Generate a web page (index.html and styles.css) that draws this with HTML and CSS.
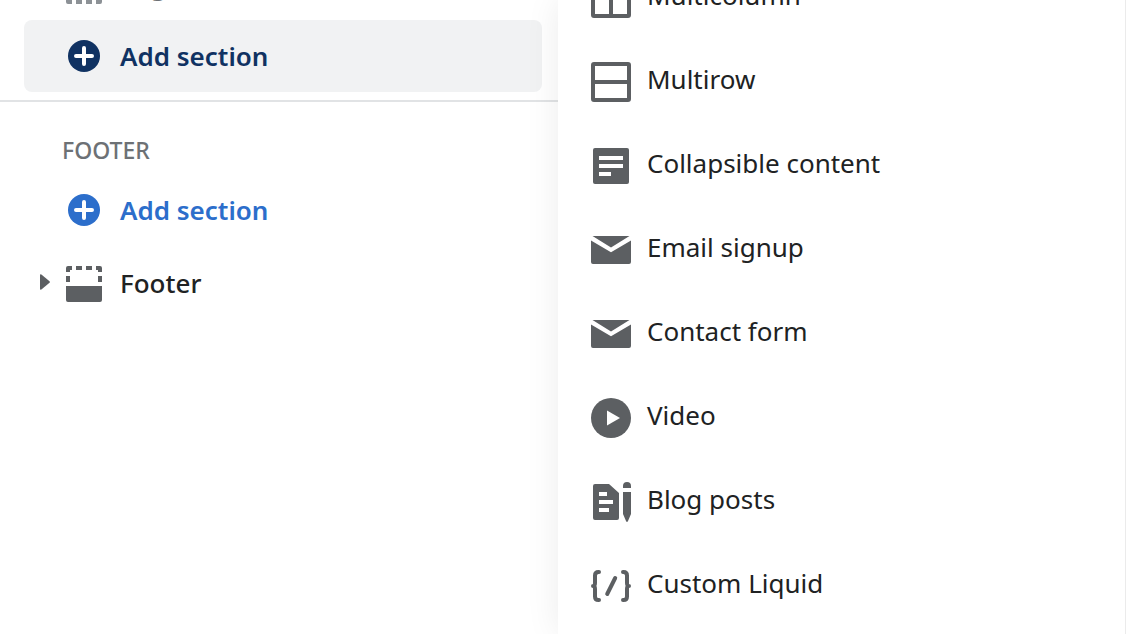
FILE: index.html
```
<!DOCTYPE html>
<html lang="en">
<head>
  <meta charset="UTF-8" />
  <meta name="viewport" content="width=device-width, initial-scale=1.0"/>
  <title>Theme editor</title>
  <link rel="stylesheet" href="styles.css">
</head>
<body>
  <aside class="sidebar">
    <section class="group template">
      <div class="row muted">
        <span class="caret"></span>
        <svg class="icon" viewBox="0 0 40 40"><path d="M4 2h32a2 2 0 0 1 2 2v14H2V4a2 2 0 0 1 2-2zM2 22h4v6H2zM34 22h4v6h-4zM2 32h4v2h2v4H4a2 2 0 0 1-2-2zM12 34h6v4h-6zM22 34h6v4h-6zM34 32h4v4a2 2 0 0 1-2 2h-4v-4h2z"/></svg>
        <span class="label">Page</span>
      </div>
      <button class="add active" type="button">
        <svg class="icon" viewBox="0 0 40 40"><circle cx="20" cy="20" r="16"/><path class="line" d="M20 12v16M12 20h16"/></svg>
        Add section
      </button>
    </section>

    <section class="group footer">
      <h2>FOOTER</h2>
      <button class="add" type="button">
        <svg class="icon" viewBox="0 0 40 40"><circle cx="20" cy="20" r="16"/><path class="line" d="M20 12v16M12 20h16"/></svg>
        Add section
      </button>
      <div class="row">
        <button class="caret" type="button" aria-label="Expand footer">
          <svg viewBox="0 0 10 16"><path d="M0 1.2Q0 0 1 .3L2 1l7.500 6.200q.9.800 0 1.600L2 15l-1 .7Q0 16 0 14.800z"/></svg>
        </button>
        <svg class="icon" viewBox="0 0 40 40"><path d="M4 2h4v4H6v2H2V4a2 2 0 0 1 2-2zM12 2h6v4h-6zM22 2h6v4h-6zM32 2h4a2 2 0 0 1 2 2v4h-4V6h-2zM2 12h4v6H2zM34 12h4v6h-4zM2 22h36v14a2 2 0 0 1-2 2H4a2 2 0 0 1-2-2z"/></svg>
        <span class="label">Footer</span>
      </div>
    </section>
  </aside>

  <main class="picker">
    <ul>
      <li><button type="button">
        <svg class="icon" viewBox="0 0 40 40"><path class="outline" d="M3 2h34a1 1 0 0 1 1 1v34a1 1 0 0 1-1 1H3a1 1 0 0 1-1-1V3a1 1 0 0 1 1-1zM20 2v36"/></svg>
        <span>Multicolumn</span>
      </button></li>
      <li><button type="button">
        <svg class="icon" viewBox="0 0 40 40"><path class="outline" d="M3 2h34a1 1 0 0 1 1 1v34a1 1 0 0 1-1 1H3a1 1 0 0 1-1-1V3a1 1 0 0 1 1-1zM2 20h36"/></svg>
        <span>Multirow</span>
      </button></li>
      <li><button type="button">
        <svg class="icon" viewBox="0 0 40 40"><rect x="2" y="2" width="36" height="36" rx="2"/><path class="cut" d="M8 10h24v4H8zM8 18h24v4H8zM8 26h12v4H8z"/></svg>
        <span>Collapsible content</span>
      </button></li>
      <li><button type="button">
        <svg class="icon" viewBox="0 0 40 40"><path d="M1.500 6h37L20 17.600zM0 10.600l20 11.600 20-11.600V32a2 2 0 0 1-2 2H2a2 2 0 0 1-2-2z"/></svg>
        <span>Email signup</span>
      </button></li>
      <li><button type="button">
        <svg class="icon" viewBox="0 0 40 40"><path d="M1.500 6h37L20 17.600zM0 10.600l20 11.600 20-11.600V32a2 2 0 0 1-2 2H2a2 2 0 0 1-2-2z"/></svg>
        <span>Contact form</span>
      </button></li>
      <li><button type="button">
        <svg class="icon" viewBox="0 0 40 40"><circle cx="20" cy="20" r="20"/><path class="cut" d="M16 12.500l13 7.500-13 7.500z"/></svg>
        <span>Video</span>
      </button></li>
      <li><button type="button">
        <svg class="icon" viewBox="0 0 40 40"><path d="M4 2h14l10 9v25a2 2 0 0 1-2 2H4a2 2 0 0 1-2-2V4a2 2 0 0 1 2-2zM32 6V4a4 4 0 0 1 8 0v2zM32 10h8v22l-3 7q-1 2-2 0l-3-7z"/><path class="cut" d="M8 10h8v4H8zM8 18h14v4H8zM8 26h10v4H8z"/></svg>
        <span>Blog posts</span>
      </button></li>
      <li><button type="button">
        <svg class="icon" viewBox="0 0 40 40"><path class="outline round" d="M8 6H7.500Q4 6 4 9.500V17q0 3-2 3 2 0 2 3v7.500Q4 34 7.500 34H8M32 6h.5Q36 6 36 9.500V17q0 3 2 3-2 0-2 3v7.500q0 3.500-3.500 3.500H32M24.200 12l-8 16"/></svg>
        <span>Custom Liquid</span>
      </button></li>
    </ul>
  </main>
</body>
</html>
```

FILE: styles.css
```
* {
  box-sizing: border-box;
}
body {
  margin: 0;
  display: flex;
  height: 100vh;
  overflow: hidden;
  font-family: "Segoe UI", "Noto Sans", "Open Sans", sans-serif;
  font-size: 26px;
  line-height: 36px;
  color: #202223;
  background: #fff;
}
button {
  margin: 0;
  padding: 0;
  border: 0;
  background: none;
  font: inherit;
  color: inherit;
  text-align: left;
  cursor: pointer;
}
.icon {
  flex: none;
  width: 40px;
  height: 40px;
  fill: #5c5f62;
}
.icon .line {
  stroke: #fff;
  stroke-width: 4;
  stroke-linecap: round;
}
.icon .cut {
  fill: #fff;
}
.icon .outline {
  fill: none;
  stroke: #5c5f62;
  stroke-width: 4;
}
.icon .round {
  stroke-linecap: round;
  stroke-linejoin: round;
}

/* left column */
.sidebar {
  flex: none;
  width: 558px;
}
.group {
  padding: 0 16px 8px 24px;
}
.template {
  margin-top: -48px;
  border-bottom: 2px solid #e1e3e5;
}
.footer {
  padding-top: 30px;
}
h2 {
  margin: 0 0 6px;
  padding-left: 38px;
  font-size: 23px;
  font-weight: 500;
  color: #6d7175;
}
.add {
  display: flex;
  align-items: center;
  gap: 16px;
  width: 100%;
  height: 72px;
  padding-left: 40px;
  border-radius: 8px;
  font-weight: 600;
  color: #2c6ecb;
}
.add .icon {
  fill: currentColor;
}
.add.active {
  background: #f1f2f3;
  color: #103262;
}
.row {
  display: flex;
  align-items: center;
  height: 68px;
  padding-left: 16px;
}
.row.muted {
  color: #6d7175;
}
.row.muted .icon {
  fill: #8c9196;
}
.footer .row {
  margin-top: 4px;
}
.caret {
  display: flex;
  width: 24px;
  padding-bottom: 4px;
}
.caret svg {
  width: 10px;
  height: 16px;
  fill: #5c5f62;
}
.label {
  margin-left: 16px;
  padding-bottom: 2px;
  font-weight: 500;
}

/* section picker */
.picker {
  flex: 1;
  border-right: 1px solid #ebebeb;
  background: #fff;
  box-shadow: 0 0 32px rgba(0, 0, 0, 0.08);
}
.picker ul {
  margin: -44px 0 0;
  padding: 0;
  list-style: none;
}
.picker button {
  display: flex;
  align-items: center;
  gap: 16px;
  width: 100%;
  height: 84px;
  padding-left: 33px;
}
.picker span {
  padding-bottom: 6px;
}
```
